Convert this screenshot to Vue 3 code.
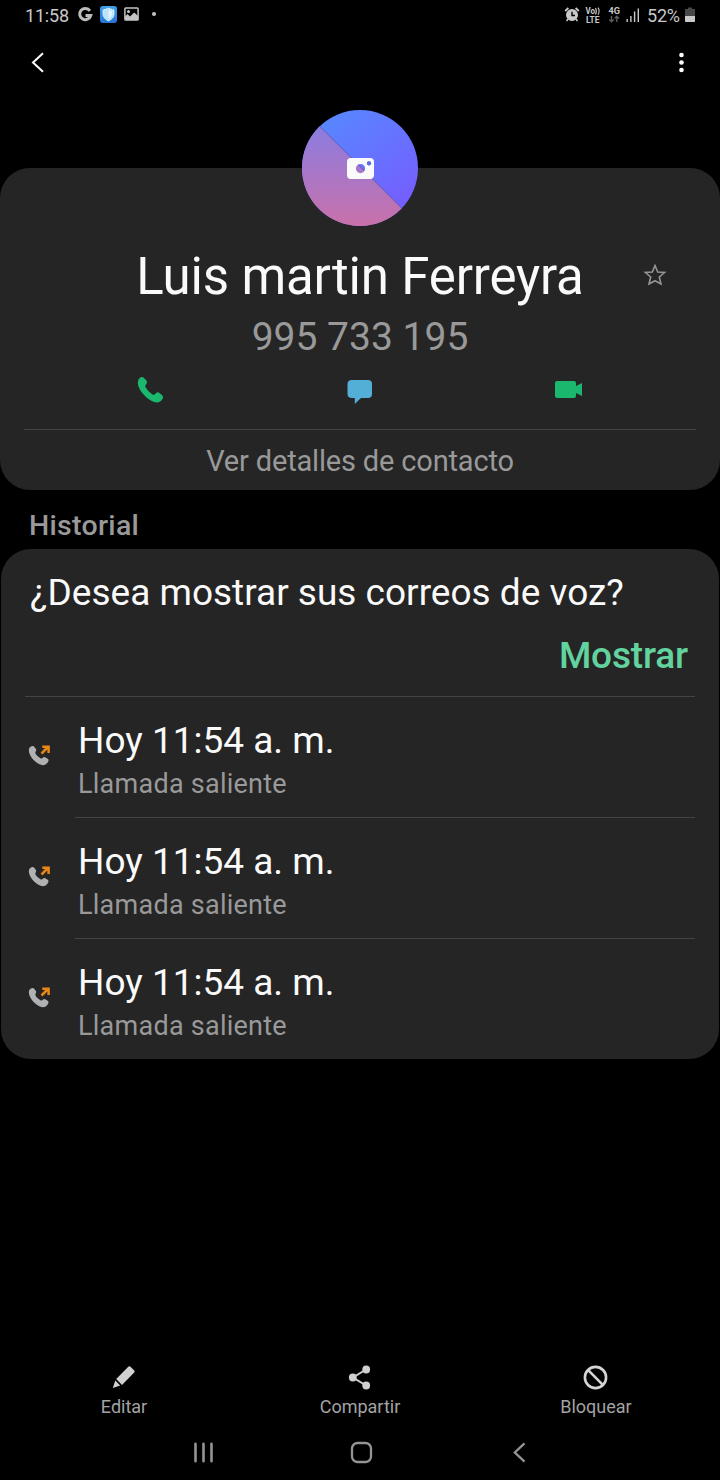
<script setup>
const calls = [
  { id: 1, time: 'Hoy 11:54 a. m.', type: 'Llamada saliente' },
  { id: 2, time: 'Hoy 11:54 a. m.', type: 'Llamada saliente' },
  { id: 3, time: 'Hoy 11:54 a. m.', type: 'Llamada saliente' },
]
</script>

<template>
  <div class="screen">
    <header class="status">
      <span class="clock">11:58</span>
      <svg class="status-left" width="84" height="20" viewBox="0 0 84 20">
        <defs>
          <linearGradient id="shieldBg" x1="0" y1="0" x2="0" y2="1">
            <stop offset="0" stop-color="#3fa0ea" />
            <stop offset="1" stop-color="#2674d8" />
          </linearGradient>
        </defs>
        <path d="M12.9 5.8 A5.6 5.6 0 1 0 13.7 10.6 H8.5" fill="none" stroke="#bcbcbc" stroke-width="3" />
        <rect x="23" y="1" width="17" height="17" rx="3" fill="url(#shieldBg)" />
        <path d="M31.5 3.3 L37 5 V9.5 Q36.5 13.5 31.5 16 Q26.5 13.5 26 9.5 V5 Z" fill="#b9e4fb" stroke="#eaf8ff" stroke-width="1" stroke-dasharray="1.6 .6" />
        <path d="M31.5 5.2 L35 6.3 V9.5 Q34.5 12.3 31.5 14 Z" fill="#e2f5ff" />
        <rect x="47.9" y="2.9" width="13.2" height="12.2" rx=".8" fill="none" stroke="#c4c4c4" stroke-width="1.5" />
        <path d="M48 11.5 L50.5 9 L53 11.500 L57.3 7.500 L61 11 V15 H48 Z" fill="#c4c4c4" />
        <circle cx="51.5" cy="6.5" r="1.5" fill="#c4c4c4" />
        <circle cx="77" cy="9" r="2" fill="#c4c4c4" />
      </svg>
      <svg class="status-right" width="78" height="20" viewBox="0 0 78 20">
        <g fill="none" stroke="#c9c9c9">
          <circle cx="9" cy="10" r="5.3" fill="#c9c9c9" stroke-width="1.4" />
          <path d="M2.2 6 L5.4 3 M15.8 6 L12.6 3" stroke-width="1.8" />
          <path d="M5 14 L3.6 16.2 M13 14 L14.4 16.2" stroke-width="1.5" />
          <path d="M9 6.7 V10.5 H12" stroke="#000" stroke-width="1.4" />
        </g>
        <g fill="#c9c9c9" class="tiny">
          <text x="22.5" y="9" font-size="8.3" textLength="9.5" lengthAdjust="spacingAndGlyphs">Vo</text>
          <text x="23" y="17.500" font-size="9.500" textLength="13.5" lengthAdjust="spacingAndGlyphs">LTE</text>
          <text x="45.5" y="8.6" font-size="9" textLength="11.5" lengthAdjust="spacingAndGlyphs">4G</text>
        </g>
        <path d="M32.5 3 Q34.2 6 32.5 9.5 M35 2.6 Q37.2 6 35 9.8" fill="none" stroke="#c9c9c9" stroke-width="1.1" />
        <path d="M48.5 11 V16.5 M46.3 14.5 L48.5 16.8 L50.7 14.5 M53.8 17 V11.5 M51.6 13.5 L53.8 11.2 L56 13.5" fill="none" stroke="#5d5d5d" stroke-width="1.4" />
        <path d="M64.2 14 V17 M67.9 11 V17 M71.6 6.5 V17 M75.3 3.5 V17" fill="none" stroke="#c9c9c9" stroke-width="1.4" />
      </svg>
      <span class="battery-text">52%</span>
      <svg class="battery" width="10" height="16" viewBox="0 0 10 16">
        <path d="M3 0.5 H7 V2 H10 V15 H0 V2 H3 Z" fill="#474747" />
        <path d="M0 9 H10 V14 Q10 15 9 15 H1 Q0 15 0 14 Z" fill="#c9c9c9" />
      </svg>
    </header>

    <nav class="toolbar">
      <svg width="16" height="24" viewBox="0 0 16 24">
        <path d="M13 3.3 L3 12.6 L13 21.8" fill="none" stroke="#fff" stroke-width="2" />
      </svg>
      <svg width="8" height="24" viewBox="0 0 8 24">
        <g fill="#fff">
          <circle cx="3.5" cy="5" r="2.3" />
          <circle cx="3.5" cy="12.5" r="2.3" />
          <circle cx="3.5" cy="20" r="2.3" />
        </g>
      </svg>
    </nav>

    <section class="card contact">
      <svg class="avatar" width="116" height="116" viewBox="0 0 116 116">
        <defs>
          <linearGradient id="topHalf" x1=".2" y1="0" x2=".85" y2=".85">
            <stop offset="0" stop-color="#5689ff" />
            <stop offset="1" stop-color="#755eff" />
          </linearGradient>
          <linearGradient id="lowHalf" gradientUnits="userSpaceOnUse" x1="0" y1="17" x2="0" y2="116">
            <stop offset="0" stop-color="#8c7ce0" />
            <stop offset="1" stop-color="#c971aa" />
          </linearGradient>
          <clipPath id="disc"><circle cx="58" cy="58" r="58" /></clipPath>
        </defs>
        <circle cx="58" cy="58" r="58" fill="url(#topHalf)" />
        <g clip-path="url(#disc)">
          <path d="M1.5 0 L117.5 116 H0 V0 Z" fill="url(#lowHalf)" />
          <path d="M1.5 0 L117.5 116" stroke="#5956a5" stroke-width=".8" />
        </g>
        <path fill="#fafafa" fill-rule="evenodd" d="M49 48 H68 Q72 48 72 52 V65 Q72 69 68 69 H49 Q45 69 45 65 V52 Q45 48 49 48 Z M58.5 54 A4.6 4.6 0 1 0 58.5 63.2 A4.6 4.6 0 1 0 58.5 54 Z M67 51.2 A2.1 2.1 0 1 0 67 55.4 A2.1 2.1 0 1 0 67 51.2 Z" />
        <circle cx="67" cy="53.3" r="2.1" fill="#5d6de0" />
      </svg>
      <div class="name-row">
        <h1 class="name">Luis martin Ferreyra</h1>
        <svg class="star" width="24" height="24" viewBox="0 0 24 24">
          <path d="M12 2.5 L14.7 9 L21.6 9.5 L16.3 14 L18 21 L12 17.7 L6 21 L7.7 14 L2.4 9.5 L9.3 9 Z" fill="none" stroke="#949494" stroke-width="1.6" />
        </svg>
      </div>
      <p class="number">995 733 195</p>
      <div class="actions">
        <svg width="30" height="30" viewBox="0 0 30 30">
          <path d="M6 2.3 Q7.7 1.7 9 3.1 L11.6 5.8 Q12.6 7.2 11.5 8.7 L10.5 10.3 Q9.9 11.3 10.7 12.6 Q13.2 16.9 17.4 19.5 Q18.7 20.2 19.8 19.3 L21.3 17.9 Q22.6 16.9 24.1 17.8 L27.2 20.2 Q28.6 21.5 27.9 23.2 Q26.2 27.3 21.5 27.5 Q17 27.3 11 22 Q3 14.5 2.8 8 Q3 3.6 6 2.3 Z" fill="#1bb76e" />
        </svg>
        <svg width="30" height="30" viewBox="0 0 30 30">
          <path d="M7 5 H23 Q27 5 27 9 V19 Q27 23 23 23 H16 L9.8 29 V23 H7 Q2.5 23 2.5 19 V9 Q2.5 5 7 5 Z" fill="#54afd7" />
        </svg>
        <svg width="30" height="30" viewBox="0 0 30 30">
          <path d="M2 6 H19 Q21 6 21 8 V11 L27 8 V21 L21 18 V21 Q21 23 19 23 H2 Q0 23 0 21 V8 Q0 6 2 6 Z" fill="#1bb76e" />
        </svg>
      </div>
      <div class="details"><span>Ver detalles de contacto</span></div>
    </section>

    <h2 class="section-title"><span>Historial</span></h2>

    <section class="card history">
      <div class="prompt">
        <p class="question"><span>¿Desea mostrar sus correos de voz?</span></p>
        <p class="show"><span>Mostrar</span></p>
      </div>
      <div v-for="call in calls" :key="call.id" class="call">
        <svg class="call-icon" width="24" height="24" viewBox="0 0 24 24">
          <path d="M4 3 Q5.2 2.7 6 3.6 L7.9 6 Q8.6 7 7.9 8 L7.4 9.2 Q7.2 10 7.7 10.9 Q9.5 13.5 12.4 15.3 Q13.4 15.9 14.2 15.2 L15.4 14.3 Q16.3 13.6 17.2 14.2 L20 16.1 Q21 17 20.2 18.5 Q18.6 22 14.7 22.2 Q10.6 22 5.6 17 Q1 12 .8 7 Q1 4 4 3 Z" fill="#b0b1b2" />
          <path d="M13.5 10.5 L20 4 M14.3 3.8 H20.6 V10" fill="none" stroke="#e88717" stroke-width="2.5" />
        </svg>
        <div class="call-body">
          <p class="call-time"><span>{{ call.time }}</span></p>
          <p class="call-type"><span>{{ call.type }}</span></p>
        </div>
      </div>
    </section>

    <footer class="bottom">
      <div class="tabs">
        <div class="tab">
          <svg width="28" height="28" viewBox="0 0 28 28">
            <path d="M18.5 2.5 Q19.5 1.7 20.5 2.7 L24.3 6.5 Q25.1 7.5 24.2 8.4 L12 21 L6.2 15 Z M5.3 16.5 L10.2 21.5 L2.8 24 Z" fill="#d0d0d0" />
          </svg>
          <span>Editar</span>
        </div>
        <div class="tab">
          <svg width="28" height="28" viewBox="0 0 28 28">
            <path d="M20 5.5 L7 13.5 L20 21.5" fill="none" stroke="#d0d0d0" stroke-width="2" />
            <g fill="#d0d0d0">
              <circle cx="20.2" cy="5.5" r="3.9" />
              <circle cx="6.8" cy="13.5" r="3.9" />
              <circle cx="20.2" cy="21.5" r="3.9" />
            </g>
          </svg>
          <span>Compartir</span>
        </div>
        <div class="tab">
          <svg width="28" height="28" viewBox="0 0 28 28">
            <circle cx="13.5" cy="13.5" r="10.6" fill="none" stroke="#d4d4d4" stroke-width="2.6" />
            <path d="M6.2 6.2 L20.8 20.8" stroke="#d4d4d4" stroke-width="2.6" />
          </svg>
          <span>Bloquear</span>
        </div>
      </div>
      <div class="system-nav">
        <svg width="24" height="24" viewBox="0 0 24 24">
          <path d="M4.5 3.8 V21.2 M12.5 3.8 V21.2 M20.5 3.8 V21.2" stroke="#949494" stroke-width="2.6" stroke-linecap="round" />
        </svg>
        <svg width="24" height="24" viewBox="0 0 24 24">
          <rect x="3" y="3" width="19" height="19" rx="5.5" fill="none" stroke="#949494" stroke-width="2.3" />
        </svg>
        <svg width="24" height="24" viewBox="0 0 24 24">
          <path d="M17.5 3.3 L7.8 12.5 L17.5 21.7" fill="none" stroke="#949494" stroke-width="2.3" />
        </svg>
      </div>
    </footer>
  </div>
</template>

<style>
body {
  background: #000;
}
</style>

<style scoped>
.screen {
  display: flex;
  flex-direction: column;
  width: 720px;
  height: 1480px;
  overflow: hidden;
  background: #000;
  color: #fafafa;
  font-family: Roboto, 'Liberation Sans', sans-serif;
  white-space: nowrap;
}
h1,
h2,
p {
  margin: 0;
  font-weight: 400;
}
svg {
  display: block;
  flex: none;
}
.status {
  display: flex;
  align-items: center;
  height: 32px;
  padding: 0 25px;
  color: #c9c9c9;
  font-size: 18px;
  line-height: 32px;
}
.clock {
  width: 52px;
  letter-spacing: -0.2px;
}
.status-left {
  margin-top: -2px;
}
.status-right {
  margin: -2px 6px 0 auto;
}
.battery-text {
  width: 38px;
  letter-spacing: -0.2px;
}
.battery {
  margin-top: -2px;
}
.tiny {
  font-weight: 700;
}
.toolbar {
  display: flex;
  justify-content: space-between;
  height: 118px;
  margin-bottom: 18px;
  padding: 18px 34px 0 30px;
  box-sizing: border-box;
}
.card {
  background: #252525;
}
.contact {
  display: flex;
  flex-direction: column;
  align-items: center;
  flex: none;
  height: 322px;
  border-radius: 30px;
}
.contact > * {
  flex: none;
}
.avatar {
  margin-top: -58px;
}
.name-row {
  display: grid;
  grid-template-columns: 1fr auto 1fr;
  align-items: center;
  width: 100%;
  height: 60px;
  margin-top: 21px;
}
.name {
  grid-column: 2;
  font-size: 51px;
  letter-spacing: -0.15px;
  line-height: 60px;
}
.star {
  justify-self: end;
  margin: -5px 53px 0 0;
}
.number {
  height: 60px;
  color: #999;
  font-size: 39px;
  line-height: 60px;
}
.actions {
  display: flex;
  justify-content: space-between;
  width: 450px;
  height: 54px;
  margin-top: 8px;
}
.details {
  box-sizing: border-box;
  width: 672px;
  height: 61px;
  border-top: 1px solid #444;
  color: #999;
  font-size: 29px;
  letter-spacing: -0.17px;
  line-height: 62px;
  text-align: center;
}
.section-title {
  height: 59px;
  padding-left: 29px;
  color: #999;
  font-size: 28.5px;
  font-weight: 500;
  letter-spacing: 0.3px;
  line-height: 71px;
}
.history {
  flex: none;
  height: 510px;
  margin: 0 1px;
  border-radius: 30px;
}
.prompt {
  height: 147px;
  margin: 0 24px;
  border-bottom: 1px solid #444;
}
.question {
  height: 76px;
  padding-left: 5px;
  font-size: 37px;
  line-height: 88px;
}
.show {
  padding-right: 7px;
  color: #62d29f;
  font-size: 37px;
  font-weight: 500;
  letter-spacing: -0.15px;
  line-height: 62px;
  text-align: right;
}
.call {
  display: flex;
  height: 121px;
  padding: 0 24px 0 27px;
}
.call-icon {
  margin: 46px 23px 0 0;
}
.call-body {
  flex: 1;
  box-sizing: border-box;
  padding: 19px 0 0 3px;
  border-bottom: 1px solid #444;
}
.call:last-child .call-body {
  border-bottom: 0;
}
.call-time {
  font-size: 37px;
  line-height: 50px;
}
.call-type {
  color: #999;
  font-size: 27px;
  letter-spacing: 0.25px;
  line-height: 37px;
}
.bottom {
  margin-top: auto;
}
.tabs {
  display: grid;
  grid-template-columns: repeat(3, 236px);
  justify-content: center;
}
.tab {
  display: flex;
  flex-direction: column;
  align-items: center;
  color: #a3a3a3;
  font-size: 18px;
  line-height: 30px;
}
.system-nav {
  display: flex;
  justify-content: space-between;
  width: 340px;
  height: 40px;
  margin: 18px 0 0 191px;
}
</style>
